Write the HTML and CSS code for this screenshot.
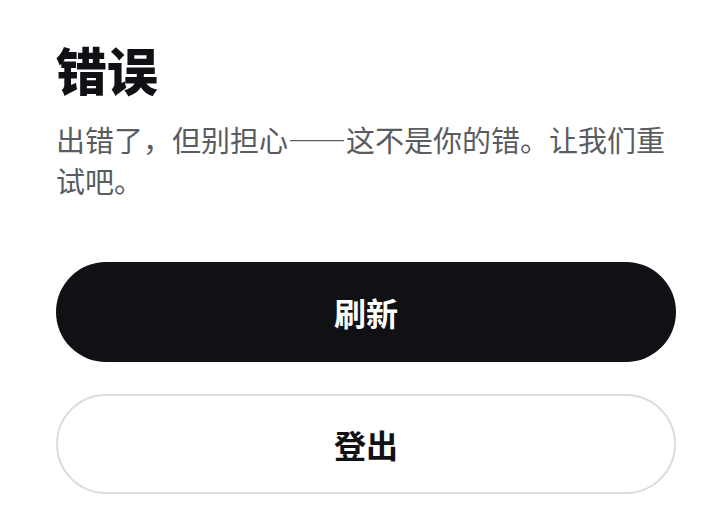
FILE: index.html
```html
<!DOCTYPE html>
<html lang="zh-CN">
<head>
<meta charset="utf-8">
<title>错误</title>
<link rel="stylesheet" href="styles.css">
</head>
<body>
<main class="page">
  <h1 class="title">错误</h1>
  <p class="message">出错了，但别担心——这不是你的错。让我们重试吧。</p>
  <div class="actions">
    <button class="btn btn-primary" type="button">刷新</button>
    <button class="btn btn-secondary" type="button">登出</button>
  </div>
</main>
</body>
</html>
```
FILE: styles.css
```css
html, body {
  margin: 0;
  padding: 0;
  background: #ffffff;
}
body {
  font-family: "Noto Sans CJK SC", "Noto Sans", sans-serif;
  color: #0f1115;
}
.page {
  width: 620px;
  padding: 41px 0 0 56px;
}
.title {
  margin: 0;
  font-size: 51px;
  line-height: 56px;
  font-weight: 900;
  color: #0f1115;
}
.message {
  margin: 22px 0 0;
  font-size: 29px;
  line-height: 41px;
  color: #595c61;
  font-weight: 400;
}
.actions {
  margin-top: 61px;
  display: flex;
  flex-direction: column;
  gap: 32px;
}
.btn {
  height: 100px;
  width: 100%;
  border-radius: 50px;
  font-family: "Noto Sans CJK SC", "Noto Sans", sans-serif;
  font-size: 32px;
  font-weight: 700;
  display: flex;
  align-items: center;
  justify-content: center;
  padding: 0;
  cursor: pointer;
}
.btn-primary {
  background: #0f1115;
  color: #ffffff;
  border: none;
}
.btn-secondary {
  background: #ffffff;
  color: #0f1115;
  border: 2px solid #dcdcde;
}
```
